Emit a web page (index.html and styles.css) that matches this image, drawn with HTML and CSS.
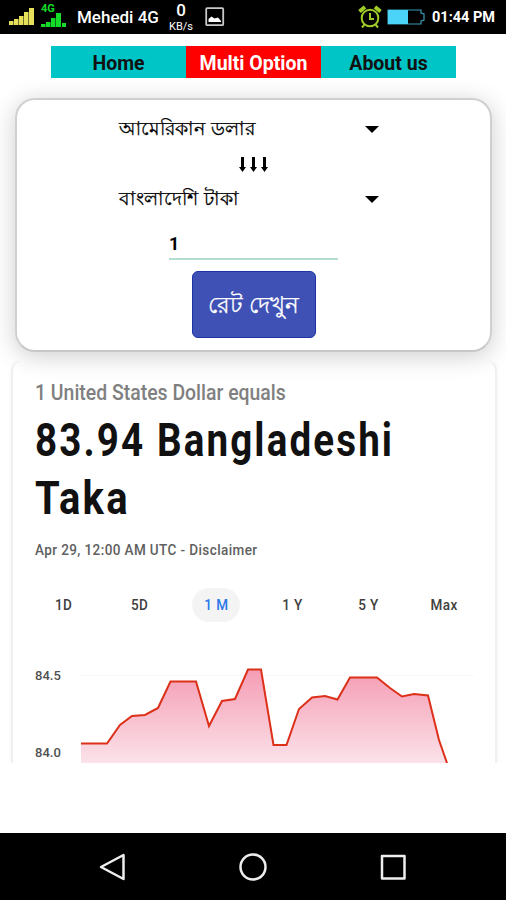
FILE: index.html
```html
<!doctype html>
<html lang="bn">
<head>
    <meta charset="utf-8">
    <title>Currency Rate</title>
    <link rel="stylesheet" href="styles.css">
</head>
<body>
    <div class="status-bar">
        <svg class="signal" width="26" height="20" viewBox="0 0 26 20" fill="#e6e05a">
            <path d="M0 14h4.500v4H0zM5 12h4.500v6H5zM10 9h4.500v9H10zM15 5h4.500v13H15zM20 1h5v17h-5z"/>
        </svg>
        <div class="signal-4g">
            <span>4G</span>
            <svg width="26" height="16" viewBox="0 0 26 16" fill="#14dc28">
                <path d="M0 11h4.500v3H0zM5 9h4.500v5H5zM10 5h4.500v9H10zM15 0h5v14h-5zM21 10h4v4h-4z"/>
            </svg>
        </div>
        <span class="carrier">Mehedi 4G</span>
        <div class="speed"><b>0</b><small>KB/s</small></div>
        <svg width="20" height="20" viewBox="0 0 20 20">
            <rect x="1.2" y="1.2" width="17" height="17" rx="1" fill="none" stroke="#c8c8c8" stroke-width="1.8"/>
            <path d="M3.5 15v-3l3-2.500 3 2 3.500-1 3 3.500v1z" fill="#fff"/>
        </svg>
        <div class="status-right">
            <svg width="24" height="24" viewBox="0 0 24 24" fill="none" stroke="#a0cc28" stroke-width="2">
                <circle cx="12" cy="13" r="8.3"/>
                <path d="M12 8v6h4M6.500 19.500L4 22.500M17.500 19.500L20 22.500"/>
                <path d="M1.500 6.500L7 2M22.500 6.500L17 2" stroke-width="4"/>
            </svg>
            <svg width="38" height="16" viewBox="0 0 38 16">
                <path d="M1 1h33v3l3 1v6l-3 1v3H1z" fill="none" stroke="#3a9cb8" stroke-width="1.200"/>
                <path d="M1 1h20v14H1z" fill="#4cd4f8"/>
            </svg>
            <span class="clock">01:44 PM</span>
        </div>
    </div>

    <div class="page">
        <div class="tabs">
            <div class="tab">Home</div>
            <div class="tab active">Multi Option</div>
            <div class="tab">About us</div>
        </div>

        <div class="converter">
            <div class="select"><span class="bn">আমেরিকান ডলার</span><i class="caret"></i></div>
            <svg class="arrows" width="32" height="18" viewBox="0 0 32 18">
                <path d="M3 2h3v10h2l-3.500 5L1 12h2zM14 2h3v10h2l-3.500 5L12 12h2zM25 2h3v10h2l-3.500 5L23 12h2z"/>
            </svg>
            <div class="select"><span class="bn">বাংলাদেশি টাকা</span><i class="caret"></i></div>
            <div class="amount">1</div>
            <div class="button"><span class="bn">রেট দেখুন</span></div>
        </div>

        <div class="result">
            <div class="equals"><span>1 United States Dollar equals</span></div>
            <h1><span>83.94 Bangladeshi</span><br><span>Taka</span></h1>
            <div class="date"><span>Apr 29, 12:00 AM UTC - Disclaimer</span></div>
            <div class="ranges">
                <div><span>1D</span></div>
                <div><span>5D</span></div>
                <div class="selected"><span>1 M</span></div>
                <div><span>1 Y</span></div>
                <div><span>5 Y</span></div>
                <div><span>Max</span></div>
            </div>
            <div class="chart">
                <div class="labels"><span>84.5</span><span>84.0</span></div>
                <svg width="394" height="103" viewBox="81 660 394 103">
                    <defs>
                        <linearGradient id="fill" gradientUnits="userSpaceOnUse" x1="0" y1="669" x2="0" y2="763">
                            <stop offset="0" stop-color="#f59cb4"/>
                            <stop offset="1" stop-color="#fbe2e9"/>
                        </linearGradient>
                    </defs>
                    <path d="M81 675.500H474" stroke="#f8f8f8"/>
                    <path d="M81 763V743.500H107L120 725L132 716L145 715L158 708L170.500 681.500H196L209 726L222 701L235 699L248 669.500H261L273.500 745H286.500L299 709L312 697.500L325 696L337.500 699.500L350 677.500H377L390 688L402 696.500L414 694L428 695.500L439 740L447 763z" fill="url(#fill)"/>
                    <path d="M81 743.500H107L120 725L132 716L145 715L158 708L170.500 681.500H196L209 726L222 701L235 699L248 669.500H261L273.500 745H286.500L299 709L312 697.500L325 696L337.500 699.500L350 677.500H377L390 688L402 696.500L414 694L428 695.500L439 740L447 763" fill="none" stroke="#dc3018" stroke-width="2"/>
                </svg>
            </div>
        </div>
    </div>

    <div class="nav-bar">
        <svg width="28" height="28" viewBox="0 0 28 28"><path d="M2 14L24.500 2V26z"/></svg>
        <svg width="28" height="28" viewBox="0 0 28 28"><circle cx="14" cy="14" r="12.500"/></svg>
        <svg width="28" height="28" viewBox="0 0 28 28"><rect x="3" y="3" width="22.500" height="22.500"/></svg>
    </div>
</body>
</html>
```
FILE: styles.css
```css
* {
    box-sizing: border-box;
}
body {
    display: flex;
    flex-direction: column;
    height: 900px;
    margin: 0;
    background-color: #fff;
    font-family: Roboto, "Noto Sans", sans-serif;
    overflow: hidden;
}
.status-bar {
    display: flex;
    align-items: center;
    height: 34px;
    padding-left: 9px;
    background-color: #000;
    color: #fff;
    flex-shrink: 0;
}
.signal-4g {
    display: flex;
    flex-direction: column;
    width: 26px;
    margin-left: 6px;
    color: #14dc28;
    font-size: 11px;
    font-weight: 700;
    line-height: 8px;
}
.carrier {
    width: 91px;
    margin-left: 10px;
    font-size: 17px;
    font-weight: 500;
    white-space: nowrap;
}
.speed {
    display: flex;
    flex-direction: column;
    width: 26px;
    margin-right: 11px;
    align-items: center;
}
.speed b {
    font-size: 17px;
    font-weight: 500;
    line-height: 20px;
    margin-top: -1px;
}
.speed small {
    font-size: 11px;
    line-height: 13px;
}
.status-right {
    display: flex;
    align-items: center;
    gap: 5px;
    margin-left: auto;
    padding-right: 11px;
}
.clock {
    width: 63px;
    margin-left: 2px;
    font-size: 14.5px;
    font-weight: 700;
    white-space: nowrap;
}
.page {
    display: flex;
    flex-direction: column;
    height: 799px;
    flex-shrink: 0;
}
.tabs {
    display: flex;
    width: 405px;
    height: 32px;
    margin: 12px 0 0 51px;
    flex-shrink: 0;
}
.tab {
    flex: 1;
    background-color: #00c5c7;
    color: #111;
    font-size: 19.5px;
    font-weight: 700;
    line-height: 35px;
    text-align: center;
    white-space: nowrap;
}
.tab.active {
    background-color: #ff0000;
    color: #fff;
}
.converter {
    position: relative;
    display: flex;
    flex-direction: column;
    align-items: center;
    height: 254px;
    margin: 20px 14px 0 15px;
    padding-top: 15px;
    background-color: #fff;
    border: 2px solid #d0d0d0;
    border-bottom-color: #c8c8c8;
    border-radius: 20px;
    box-shadow: 0 4px 24px rgba(0, 0, 0, 0.2);
    flex-shrink: 0;
    z-index: 1;
}
.select {
    display: flex;
    align-items: center;
    justify-content: space-between;
    width: 260px;
    height: 28px;
    margin-right: 10px;
}
.bn {
    font-size: 19px;
    line-height: 30px;
    white-space: nowrap;
    word-spacing: 2px;
    -webkit-text-stroke: 0.25px;
}
.caret {
    border: 7px solid transparent;
    border-top-color: #000;
    border-bottom: 0;
}
.arrows {
    margin: 12px 0;
}
.amount {
    width: 169px;
    height: 33px;
    margin-top: 14px;
    border-bottom: 2px solid #b4ddd0;
    font-size: 18px;
    font-weight: 700;
    line-height: 33px;
}
.button {
    width: 124px;
    height: 67px;
    margin-top: 11px;
    background-color: #3f51b5;
    border: 1px solid #1c34a4;
    border-radius: 6px;
    color: #fff;
    text-align: center;
}
.button .bn {
    font-size: 23px;
    line-height: 67px;
    word-spacing: 0;
}
.result {
    width: 486px;
    height: 402px;
    margin: 9px 0 0 11px;
    padding: 17px 0 0 22px;
    border: 1px solid #f0f0f0;
    border-width: 0 2px;
    border-radius: 10px 10px 0 0;
    box-shadow: 0 0 4px rgba(0, 0, 0, 0.05);
    clip-path: inset(0 -4px 0 -4px);
    flex-shrink: 0;
}
.result span {
    display: inline-block;
    transform-origin: left center;
    white-space: nowrap;
}
.equals {
    height: 30px;
    color: #808080;
    font-size: 22px;
    font-weight: 500;
    line-height: 29px;
}
.equals span {
    transform: scaleX(0.883);
}
h1 {
    height: 117px;
    margin: 3px 0 0;
    color: #111;
    font-size: 47px;
    font-weight: 700;
    line-height: 58px;
}
h1 span {
    letter-spacing: 2.6px;
    transform: scaleX(0.82);
}
h1 span:last-child {
    transform: scaleX(0.85);
}
.date {
    height: 32px;
    margin-top: 6px;
    color: #606060;
    font-size: 15px;
    font-weight: 500;
    line-height: 32px;
}
.date span {
    letter-spacing: 0.45px;
    transform: scaleX(0.9);
}
.ranges {
    display: flex;
    height: 34px;
    margin: 22px 0 0 5px;
    gap: 28px;
    color: #404040;
    font-size: 15px;
    font-weight: 500;
    line-height: 34px;
}
.ranges div {
    width: 48px;
    border-radius: 17px;
    text-align: center;
}
.ranges .selected {
    background-color: #f4f4f5;
    color: #2a78e8;
}
.ranges span {
    transform: scaleX(0.9);
    transform-origin: center;
    letter-spacing: 0.5px;
}
.chart {
    display: flex;
    margin-top: 38px;
}
.labels {
    display: flex;
    flex-direction: column;
    gap: 57px;
    width: 46px;
    padding-top: 6px;
    color: #505050;
    font-size: 13px;
    font-weight: 500;
    line-height: 20px;
}
.chart svg {
    flex-shrink: 0;
}
.nav-bar {
    display: flex;
    justify-content: center;
    align-items: center;
    gap: 112px;
    height: 67px;
    background-color: #000;
    flex-shrink: 0;
}
.nav-bar svg {
    fill: none;
    stroke: #eee;
    stroke-width: 2.5;
    stroke-linejoin: round;
}
```
